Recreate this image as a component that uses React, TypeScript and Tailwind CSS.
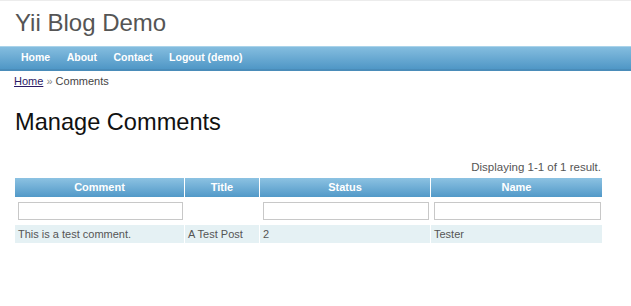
import React from "react";

const font = { fontFamily: '"Liberation Sans", Arial, sans-serif' };

export default function App() {
  const cols = "grid grid-cols-[169px_74px_170px_171px] gap-x-px";
  return (
    <div className="w-[631px] h-[306px] bg-white overflow-hidden border-t border-[#ececec]" style={font}>
      <div className="h-[45px] pl-[15px] pt-[10px]">
        <div className="text-[24px] leading-[24px] text-[#555]">Yii Blog Demo</div>
      </div>
      <div className="h-[25px] bg-gradient-to-b from-[#84bddf] to-[#4f97c6] border-t border-[#a9d3ea] border-b-2 border-b-[#4a8cb9] flex items-center pl-[21px] gap-[16.5px] text-[10.5px] font-bold text-white">
        <span>Home</span>
        <span>About</span>
        <span>Contact</span>
        <span>Logout (demo)</span>
      </div>
      <div className="pl-[14px] pt-[5px] text-[11px] leading-[11px] text-[#444]">
        <span className="text-[#2b1b66] underline">Home</span>
        <span className="text-[#888]"> » </span>
        <span>Comments</span>
      </div>
      <div className="pl-[15px] pt-[23px] text-[23.6px] leading-[24px] text-[#111]">Manage Comments</div>
      <div className="pl-[15px] pr-[29px] pt-[27px]">
        <div className="text-right text-[11.5px] leading-[12px] text-[#555] pr-[1px]">Displaying 1-1 of 1 result.</div>
        <div className="mt-[5px] w-[587px] text-[11px]">
          <div className={`${cols} h-[19px] font-bold text-white`}>
            {["Comment", "Title", "Status", "Name"].map((t) => (
              <div key={t} className="bg-gradient-to-b from-[#8cc2e2] to-[#5199c8] flex items-center justify-center">
                {t}
              </div>
            ))}
          </div>
          <div className={`${cols} h-[28px] items-center`}>
            <div className="pl-[3px] pr-[1px]"><div className="h-[18px] border border-[#c8c8c8] bg-white" /></div>
            <div />
            <div className="pl-[3px] pr-[1px]"><div className="h-[18px] border border-[#c8c8c8] bg-white" /></div>
            <div className="pl-[3px] pr-[1px]"><div className="h-[18px] border border-[#c8c8c8] bg-white" /></div>
          </div>
          <div className={`${cols} h-[18px] text-[#555]`}>
            <div className="bg-[#e5f1f4] pl-[3px] flex items-center">This is a test comment.</div>
            <div className="bg-[#e5f1f4] pl-[3px] flex items-center">A Test Post</div>
            <div className="bg-[#e5f1f4] pl-[3px] flex items-center">2</div>
            <div className="bg-[#e5f1f4] pl-[3px] flex items-center">Tester</div>
          </div>
        </div>
      </div>
    </div>
  );
}
